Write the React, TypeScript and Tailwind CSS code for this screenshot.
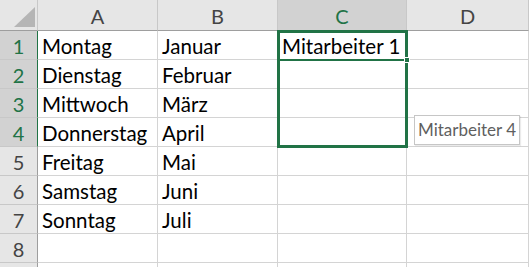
const cols = ['A', 'B', 'C', 'D'];
const widths = ['w-[120px]', 'w-[120px]', 'w-[129px]', 'w-[122px]'];

const data: string[][] = [
  ['Montag', 'Januar', 'Mitarbeiter 1', ''],
  ['Dienstag', 'Februar', '', ''],
  ['Mittwoch', 'März', '', ''],
  ['Donnerstag', 'April', '', ''],
  ['Freitag', 'Mai', '', ''],
  ['Samstag', 'Juni', '', ''],
  ['Sonntag', 'Juli', '', ''],
  ['', '', '', ''],
  ['', '', '', ''],
];

export default function App() {
  return (
    <div className="relative w-[529px] h-[267px] overflow-hidden bg-white text-black" style={{ fontFamily: 'Lato, "Open Sans", sans-serif' }}>
      {/* header row */}
      <div className="flex h-[31px]">
        <div className="relative w-[38px] shrink-0 bg-[#e6e6e6] border-r border-b border-r-[#c8c8c8] border-b-[#9e9e9e]">
          <svg className="absolute left-[14px] top-[7px]" width="21" height="20" viewBox="0 0 21 20">
            <polygon points="21,0 21,20 0,20" fill="#b5b5b5" />
          </svg>
        </div>
        {cols.map((c, i) => (
          <div
            key={c}
            className={`${widths[i]} shrink-0 flex items-end justify-center pb-[2px] text-[20px] leading-[24px] border-r border-b border-r-[#c8c8c8] ${c === 'C' ? 'bg-[#d2d2d2] text-[#217346] border-b-[#217346]' : 'bg-[#e6e6e6] text-[#444] border-b-[#9e9e9e]'}`}
          >
            {c}
          </div>
        ))}
      </div>

      {data.map((row, r) => (
        <div key={r} className="flex h-[29px]">
          <div
            className={`w-[38px] shrink-0 flex items-end justify-center pb-[1px] text-[20px] leading-[24px] border-b border-b-[#c8c8c8] border-r ${r < 4 ? 'bg-[#d2d2d2] text-[#217346] border-r-[#217346]' : 'bg-[#e6e6e6] text-[#444] border-r-[#9e9e9e]'}`}
          >
            {r < 8 ? r + 1 : ''}
          </div>
          {row.map((v, i) => (
            <div
              key={i}
              className={`${widths[i]} shrink-0 flex items-end pl-[4px] pb-[1px] text-[20.5px] leading-[24px] whitespace-nowrap border-r border-b border-[#d4d4d4]`}
            >
              {v}
            </div>
          ))}
        </div>
      ))}

      {/* selection C1:C4 */}
      <div className="absolute left-[277px] top-[30px] w-[131px] h-[118px] border-[3px] border-[#217346]" />
      <div className="absolute left-[277px] top-[59px] w-[131px] h-[2px] bg-[#217346]" />
      <div className="absolute left-[404px] top-[57px] w-[6px] h-[6px] bg-[#217346] border border-white" />

      {/* fill tooltip */}
      <div className="absolute left-[414px] top-[115px] h-[30px] px-[3px] flex items-center bg-white border border-[#c6c6c6] text-[17px] text-[#5f5f5f] shadow-[1px_1px_1px_rgba(0,0,0,0.08)]">
        Mitarbeiter 4
      </div>
    </div>
  );
}
